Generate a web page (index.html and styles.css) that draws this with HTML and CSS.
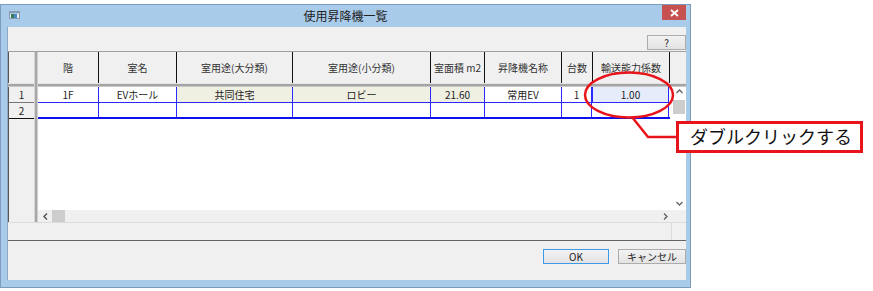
FILE: index.html
```html
<!DOCTYPE html>
<html lang="ja">
<head>
<meta charset="utf-8">
<title>使用昇降機一覧</title>
<link rel="stylesheet" href="styles.css">
</head>
<body>
<div class="window">
  <div class="titlebar">
    <svg class="appicon" width="11" height="8" viewBox="0 0 11 8">
      <rect x="0.5" y="0.5" width="10" height="7" fill="#e8eef4" stroke="#8a9aaa"/>
      <rect x="1" y="1" width="10" height="1.5" fill="#7f9fc0"/>
      <rect x="2" y="3" width="3" height="4" fill="#2f7f5f"/>
      <rect x="5" y="3" width="3" height="4" fill="#4a88c8"/>
    </svg>
    <div class="title">使用昇降機一覧</div>
    <div class="close">
      <svg width="9" height="8" viewBox="0 0 9 8"><path d="M1 1 L8 7 M8 1 L1 7" stroke="#fff" stroke-width="1.8"/></svg>
    </div>
  </div>
  <div class="client">
    <div class="toolbar"><div class="btn help">?</div></div>
    <div class="grid">
      <div class="corner"></div>
      <div class="vsplit"></div>
      <div class="head">
        <div class="hc w1">階</div>
        <div class="hc w2">室名</div>
        <div class="hc w3">室用途(大分類)</div>
        <div class="hc w4">室用途(小分類)</div>
        <div class="hc w5">室面積 m2</div>
        <div class="hc w6">昇降機名称</div>
        <div class="hc w7">台数</div>
        <div class="hc w8">輸送能力係数</div>
        <div class="hc filler"></div>
      </div>
      <div class="hsplit"></div>
      <div class="rowheads">
        <div class="rh">1</div>
        <div class="rh last">2</div>
      </div>
      <div class="body">
        <div class="bodymain">
          <div class="rows">
            <div class="row">
              <div class="dc w1">1F</div>
              <div class="dc w2">EVホール</div>
              <div class="dc w3 ro">共同住宅</div>
              <div class="dc w4 ro">ロビー</div>
              <div class="dc w5 ro">21.60</div>
              <div class="dc w6">常用EV</div>
              <div class="dc w7">1</div>
              <div class="dc w8 sel">1.00</div>
            </div>
            <div class="row last">
              <div class="dc w1"></div>
              <div class="dc w2"></div>
              <div class="dc w3"></div>
              <div class="dc w4"></div>
              <div class="dc w5"></div>
              <div class="dc w6"></div>
              <div class="dc w7"></div>
              <div class="dc w8"></div>
            </div>
          </div>
          <div class="vscroll">
            <svg class="arrow up" width="7" height="5" viewBox="0 0 7 5"><path d="M0.5 4 L3.5 1 L6.5 4" fill="none" stroke="#606060" stroke-width="1.3"/></svg>
            <div class="vthumb"></div>
            <svg class="arrow down" width="7" height="5" viewBox="0 0 7 5"><path d="M0.5 1 L3.5 4 L6.5 1" fill="none" stroke="#606060" stroke-width="1.3"/></svg>
          </div>
        </div>
        <div class="hscroll">
          <svg class="harrow" width="5" height="7" viewBox="0 0 5 7"><path d="M4 0.5 L1 3.5 L4 6.5" fill="none" stroke="#505050" stroke-width="1.4"/></svg>
          <div class="hthumb"></div>
          <svg class="harrow right" width="5" height="7" viewBox="0 0 5 7"><path d="M1 0.5 L4 3.5 L1 6.5" fill="none" stroke="#606060" stroke-width="1.3"/></svg>
        </div>
      </div>
    </div>
    <div class="status"><div class="status-main"></div><div class="status-end"></div></div>
    <div class="footer">
      <div class="btn ok">OK</div>
      <div class="btn cancel">キャンセル</div>
    </div>
  </div>
</div>
<svg class="annot" width="873" height="291" viewBox="0 0 873 291">
  <ellipse cx="629" cy="95" rx="44" ry="22.5" fill="none" stroke="#e8141b" stroke-width="2.5"/>
  <polyline points="632,117 648,137 677,137" fill="none" stroke="#e8141b" stroke-width="2.5"/>
</svg>
<div class="callout">ダブルクリックする</div>
</body>
</html>
```
FILE: styles.css
```css
* { box-sizing: border-box; }
body {
  margin: 0;
  background: #fff;
  font-family: "Noto Sans CJK JP", "Noto Sans", sans-serif;
  color: #000;
  position: relative;
  width: 873px;
  height: 291px;
  overflow: hidden;
}
.window {
  margin-top: 4px;
  width: 691px;
  height: 284px;
  background: #a9cbea;
  border: 1px solid #7d9cbd;
  display: flex;
  flex-direction: column;
}
.titlebar {
  height: 22px;
  display: flex;
  align-items: flex-start;
  position: relative;
}
.appicon { margin: 6px 0 0 8px; }
.title {
  position: absolute;
  left: 0; right: 0;
  top: 3px;
  text-align: center;
  font-size: 12px;
  line-height: 16px;
  color: #222;
}
.close {
  position: absolute;
  right: 4px;
  top: 0;
  width: 24px;
  height: 15px;
  background: #c75050;
  display: flex;
  align-items: center;
  justify-content: center;
}
.client {
  margin: 0 4px 0 6px;
  height: 253px;
  background: #f0f0f0;
  border-left: 1px solid #8ea7c2;
  display: flex;
  flex-direction: column;
  font-size: 10px;
}
.toolbar {
  height: 24px;
  display: flex;
  justify-content: flex-end;
  align-items: flex-start;
  padding: 8px 0 0 0;
}
.btn {
  background: linear-gradient(#f2f2f2, #e3e3e3);
  border: 1px solid #acacac;
  display: flex;
  align-items: center;
  justify-content: center;
  font-size: 10px;
  line-height: 12px;
  color: #222;
}
.help { width: 39px; height: 15px; }
.grid {
  height: 171px;
  display: grid;
  grid-template-columns: 26px 4px 1fr;
  grid-template-rows: 31px 4px 1fr;
  border-top: 1px solid #a0a0a0;
}
.corner { grid-column: 1; grid-row: 1; border-left: 1px solid #555; }
.vsplit {
  grid-column: 2; grid-row: 1 / 4;
  background: linear-gradient(90deg, #d8d8d8 0 1px, #a7a7a7 1px 3px, #d0d0d0 3px);
  z-index: 1;
}
.head { grid-column: 3; grid-row: 1; display: flex; }
.hc {
  border-right: 1px solid #111;
  display: flex;
  align-items: center;
  justify-content: center;
  font-size: 10px;
  color: #333;
  padding-bottom: 1px;
}
.filler { flex: 1; border-right: none; }
.w1 { width: 61px; }
.w2 { width: 78px; }
.w3 { width: 116px; }
.w4 { width: 138px; }
.w5 { width: 54px; }
.w6 { width: 77px; }
.w7 { width: 31px; }
.w8 { width: 77px; }
.hsplit {
  grid-column: 1 / 4; grid-row: 2;
  background: linear-gradient(#e4e4e4 0 1px, #a4a4a4 1px 3px, #c8c8c8 3px);
}
.rowheads {
  grid-column: 1; grid-row: 3;
  display: flex;
  flex-direction: column;
  border-left: 1px solid #555;
}
.rh {
  height: 16px;
  border-bottom: 1px solid #777;
  display: flex;
  align-items: center;
  justify-content: center;
  font-size: 10px;
  color: #222;
}
.rh.last { border-bottom: 1px solid #111; }
.body {
  grid-column: 3; grid-row: 3;
  display: flex;
  flex-direction: column;
  background: #fff;
}
.bodymain { flex: 1; display: flex; }
.rows { width: 632px; }
.row { display: flex; height: 16px; border-bottom: 1px solid #2a2aff; }
.row.last { height: 16px; border-bottom: 2px solid #1010ee; }
.dc {
  border-right: 1px solid #2a2aff;
  display: flex;
  align-items: center;
  justify-content: center;
  font-size: 10px;
  color: #222;
}
.dc.ro { background: #efefe2; }
.dc.sel { background: #e6ecfa; border-left: 1px solid #2a2aff; }
.row .w7 { width: 30px; }
.vscroll {
  flex: 1;
  background: #fff;
  display: flex;
  flex-direction: column;
  align-items: center;
  padding-left: 2px;
}
.arrow.up { margin-top: 2px; }
.vthumb { width: 12px; height: 14px; background: #cdcdcd; margin-top: 6px; }
.arrow.down { margin-top: auto; margin-bottom: 4px; }
.hscroll {
  height: 12px;
  background: #f0f0f0;
  display: flex;
  align-items: center;
}
.harrow { margin: 0 4px 0 5px; }
.hthumb { width: 13px; height: 12px; background: #cdcdcd; }
.harrow.right { margin-left: auto; margin-right: 18px; }
.status {
  height: 19px;
  display: flex;
  border-top: 1px solid #dcdcdc;
  border-bottom: 1px solid #646464;
}
.status-main { flex: 1; border-right: 1px solid #dcdcdc; }
.status-end { width: 14px; }
.footer {
  flex: 1;
  display: flex;
  justify-content: flex-end;
  align-items: flex-start;
  padding-top: 8px;
  gap: 9px;
}
.ok { width: 66px; height: 15px; border-color: #3c9be8; }
.cancel { width: 68px; height: 15px; }
.annot { position: absolute; left: 0; top: 0; pointer-events: none; }
.callout {
  position: absolute;
  left: 676px;
  top: 121px;
  width: 187px;
  height: 32px;
  border: 3px solid #e8141b;
  background: #fff;
  font-size: 18px;
  line-height: 24px;
  padding-left: 11px;
  color: #111;
}
```
